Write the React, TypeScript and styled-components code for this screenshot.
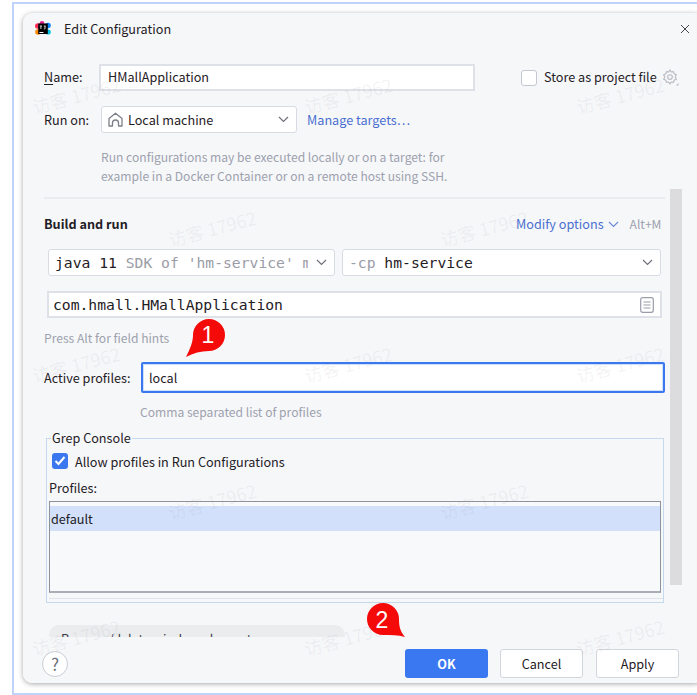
import React from "react";
import styled, { createGlobalStyle } from "styled-components";

const Global = createGlobalStyle`
  html, body { margin: 0; padding: 0; background: #fff; }
  body { font-family: "Noto Sans CJK SC", "Noto Sans", sans-serif; width: 697px; height: 695px; overflow: hidden; }
`;

const Frame = styled.div`
  position: relative; box-sizing: border-box;
  margin-left: 12px; width: 685px; margin-top: 2px; height: 693px;
  border: solid #bfd3fb; border-width: 2px 0 2px 2px;
  padding: 9px 0 9px 9px; overflow: hidden; background: #fff;
`;
const Dialog = styled.div`
  box-sizing: border-box; width: 680px; height: 670px; background: #f6f7f9;
  border-radius: 9px; box-shadow: 0 1px 5px rgba(0,0,0,.35);
  display: flex; flex-direction: column; position: relative; color: #1f2025;
  font-size: 12.65px; line-height: 18px; overflow: hidden;
`;
const TitleBar = styled.div`
  display: flex; align-items: center; height: 32px; padding: 0 13px 0 12px; flex: none;
`;
const TitleText = styled.span` margin: 0 0 1px 13px; flex: 1; `;
const Body = styled.div`
  flex: 1; display: flex; flex-direction: column; padding: 19px 0 0 21px; position: relative; min-height: 0; overflow: hidden;
`;
const Row = styled.div<{ $gap?: number; $top?: number; $left?: number }>`
  display: flex; align-items: center; gap: ${p => p.$gap ?? 0}px;
  margin-top: ${p => p.$top ?? 0}px; margin-left: ${p => p.$left ?? 0}px; flex: none;
`;
const Label = styled.span<{ $w: number; $bold?: boolean; $up?: boolean }>`
  width: ${p => p.$w}px; flex: none; font-weight: ${p => p.$bold ? 700 : 400}; margin-bottom: ${p => p.$up ? 2 : 0}px;
  u { text-underline-offset: 2px; }
`;
const Field = styled.div<{ $w: number; $focus?: boolean; $mono?: boolean; $h?: number }>`
  box-sizing: border-box; width: ${p => p.$w}px; height: ${p => p.$h ?? 27}px; background: #fff;
  border: 2px solid ${p => p.$focus ? "#3b78f0" : "#dfe1e8"};
  ${p => p.$focus ? "box-shadow: inset 0 0 0 1px #cfe0fb; border-radius: 2px;" : ""}
  display: flex; align-items: center; padding: 0 6px ${p => p.$focus ? 0 : 2}px ${p => p.$focus ? 6 : 7}px; flex: none;
  ${p => p.$mono ? `font-family: "DejaVu Sans Mono", monospace; font-size: 14.7px; padding: 0 6px 0 4px; justify-content: space-between;` : ""}
`;
const Select = styled.div<{ $w: number }>`
  box-sizing: border-box; width: ${p => p.$w}px; height: 27px; background: #fff;
  border: 1.5px solid #d9dbe3; border-radius: 3px; display: flex; align-items: center; flex: none;
  padding: 0 7px 0 6px; gap: 5px; white-space: nowrap; overflow: hidden;
`;
const SelectText = styled.span` flex: 1; min-width: 0; overflow: hidden; white-space: nowrap; `;
const Mono = styled(SelectText)<{ $clip?: boolean }>`
  font-family: "DejaVu Sans Mono", monospace; font-size: 14.7px; margin-right: ${p => p.$clip ? 3 : 0}px;
`;
const MonoGray = styled.span` color: #9a9ca6; `;
const Link = styled.span<{ $left?: number }>` color: #4a6fd0; margin-left: ${p => p.$left ?? 0}px; `;
const Gray = styled.span<{ $left?: number }>`
  color: #9da1ae; display: block; font-size: 12.1px; margin-left: ${p => p.$left ?? 0}px;
`;
const Help = styled.div`
  color: #9da1ae; font-size: 12.1px; margin: 14px 0 0 57px; line-height: 19px; flex: none;
`;
const Divider = styled.div`
  height: 2px; background: #ebecf0; width: 621px; margin-top: 12px; flex: none;
`;
const Box = styled.div<{ $checked?: boolean }>`
  box-sizing: border-box; width: 16px; height: 16px; border-radius: 3px; flex: none;
  background: ${p => p.$checked ? "#3b78f0" : "#fff"};
  border: ${p => p.$checked ? "none" : "1.5px solid #c4c7d2"};
  display: flex; align-items: center; justify-content: center;
  ${p => p.$checked ? "align-self: flex-start; margin-top: 1px;" : ""}
`;
const Store = styled.div`
  display: flex; align-items: center; margin-left: 46px; white-space: nowrap;
  span { margin: 0 5px 2px 7px; }
`;
const Group = styled.div`
  box-sizing: border-box; width: 618px; height: 165px; margin: 17px 0 0 2px; border: 1px solid #c5d9ee;
  position: relative; padding: 13px 2px 0 2px; flex: none;
`;
const Legend = styled.span`
  position: absolute; left: 4px; top: -10px; background: #f6f7f9; padding: 0 1px; line-height: 18px;
`;
const CheckText = styled.span` padding-top: 1px; `;
const ListBox = styled.div`
  box-sizing: border-box; width: 612px; height: 92px; border: 1px solid #8e929c; border-bottom: 2px solid #a9adb5;
  margin-top: 4px; padding-top: 4px; background: #f8f9fa;
`;
const ListItem = styled.div`
  background: #d2e0fb; height: 25px; line-height: 25px; padding-left: 1px;
`;
const GroupLine = styled.div`
  height: 1px; background: #dfe3ea; margin-top: 5px; width: 614px;
`;
const Pill = styled.div`
  box-sizing: border-box; margin: 22px 0 0 5px; width: 296px; height: 28px; border-radius: 10px; background: #ebecee; padding-left: 12px;
  line-height: 28px; color: #3a3c44; white-space: nowrap; flex: none; overflow: hidden;
`;
const Footer = styled.div`
  box-sizing: border-box; flex: none; height: 46px; background: #f6f7f9; display: flex; align-items: flex-start;
  padding: 12px 24px 0 19px; position: relative;
`;
const Help2 = styled.div`
  box-sizing: border-box; width: 26px; height: 26px; border-radius: 50%; background: #fff; border: 1px solid #c9ccd4;
  color: #6e717a; font-size: 17px; line-height: 24px; text-align: center; margin-top: 2px;
`;
const Spacer = styled.div` flex: 1; `;
const Btn = styled.div<{ $primary?: boolean; $gap: number }>`
  box-sizing: border-box; width: 83px; height: 29px; border-radius: 3px; margin-left: ${p => p.$gap}px;
  display: flex; align-items: center; justify-content: center;
  background: ${p => p.$primary ? "#3a78f2" : "#fff"};
  color: ${p => p.$primary ? "#fff" : "#1f2025"};
  border: ${p => p.$primary ? "none" : "1.5px solid #d3d5dc"};
  font-weight: ${p => p.$primary ? 700 : 400};
`;
const Scroll = styled.div`
  position: absolute; left: 647px; top: 144px; width: 12px; height: 396px; background: #dcdcde;
`;
const Watermarks = styled.div` position: absolute; inset: 0; pointer-events: none; z-index: 2; `;
const Mark = styled.span<{ $x: number; $y: number }>`
  position: absolute; left: ${p => p.$x - 14}px; top: ${p => p.$y - 4}px; color: rgba(120,125,140,.09);
  font: 18px "Noto Sans CJK SC", sans-serif; transform: translate(-50%, -50%) rotate(-15deg); white-space: nowrap;
`;
const Pin = styled.svg<{ $x: number; $y: number }>`
  position: absolute; left: ${p => p.$x - 14}px; top: ${p => p.$y - 4}px; z-index: 3; overflow: visible;
`;

const marks: [number, number][] = [];
[76, 348, 620].forEach(x => { marks.push([x, 95], [x, 364], [x, 637]); });
[212, 484].forEach(x => { marks.push([x, 228], [x, 501]); });

const Chevron = ({ color = "#6e717a", left = 0 }: { color?: string; left?: number }) => (
  <svg width="11" height="7" viewBox="0 0 11 7" fill="none" stroke={color} strokeWidth="1.2" style={{ flex: "none", marginLeft: left }}>
    <path d="M1 1l4.500 4.500L10 1" />
  </svg>
);

const Logo = () => (
  <svg width="16" height="16" viewBox="0 0 16 16" style={{ flex: "none" }}>
    <circle cx="2.800" cy="5" r="2.800" fill="#ff2d55" />
    <circle cx="3" cy="11" r="2.800" fill="#ff8a00" />
    <circle cx="13" cy="4.500" r="2.800" fill="#0a84ff" />
    <circle cx="13.200" cy="11" r="2.600" fill="#00c2e0" />
    <circle cx="7" cy="2.500" r="2.400" fill="#e0218a" />
    <rect x="3.200" y="2.500" width="9.600" height="10.500" fill="#000" />
    <rect x="4.500" y="11" width="4" height="1" fill="#fff" />
    <path d="M4.800 5h2.200M5.900 5v3M8.800 5h1.800M10 5v2.500q0 .7-1.100.5" stroke="#fff" strokeWidth=".8" fill="none" />
  </svg>
);

const House = () => (
  <svg width="15" height="15" viewBox="0 0 15 15" fill="none" stroke="#7d808a" strokeWidth="1.300" style={{ flex: "none" }}>
    <path d="M1 6.500L7.500 1.200 14 6.500V14h-3.500v-3a3 3 0 0 0-6 0v3H1z" strokeLinejoin="round" />
  </svg>
);

const Gear = () => (
  <svg width="17" height="17" viewBox="0 0 17 17" fill="none" stroke="#b6b9c2" strokeWidth="1.100" style={{ flex: "none" }}>
    <path d="M8 1l1.200 2 2.300-.4.700 2.200 2.100 1L13.200 8l1.100 2.200-2.100 1-.7 2.200-2.300-.4L8 15l-1.200-2-2.300.4-.7-2.200-2.100-1L2.800 8 1.700 5.800l2.100-1 .7-2.200 2.300.4z" />
    <circle cx="8" cy="8" r="2.300" />
    <path d="M16.500 14v2.500h-2.500z" fill="#b6b9c2" stroke="none" />
  </svg>
);

const Close = () => (
  <svg width="10" height="10" viewBox="0 0 10 10" stroke="#44464e" strokeWidth="1" fill="none">
    <path d="M1 1l8 8M9 1l-8 8" />
  </svg>
);

const DocIcon = () => (
  <svg width="14" height="16" viewBox="0 0 14 16" fill="none" stroke="#9a9da8" strokeWidth="1.200" style={{ flex: "none" }}>
    <rect x=".7" y=".7" width="12.600" height="14.600" rx="2" />
    <path d="M3.500 5h7M3.500 8h7M3.500 11h7" />
  </svg>
);

const PinOne = () => (
  <Pin $x={185} $y={316} width="40" height="42" viewBox="0 0 40 42">
    <path d="M1 41C5 33 8 26 8 19A16 16 0 1 1 24 35C16 35 8 37 1 41z" fill="#f50a0a" />
    <text x="23" y="27" fill="#fff" fontSize="23" fontFamily="Liberation Sans" textAnchor="middle">1</text>
  </Pin>
);
const PinTwo = () => (
  <Pin $x={366} $y={602} width="40" height="36" viewBox="0 0 40 36">
    <path d="M39 35C34 29 33 24 33 17A16 16 0 1 0 17 33C25 33 32 33 39 35z" fill="#f50a0a" />
    <text x="16" y="26" fill="#fff" fontSize="23" fontFamily="Liberation Sans" textAnchor="middle">2</text>
  </Pin>
);

export default function App() {
  return (
    <>
      <Global />
      <Frame>
        <Dialog>
          <TitleBar>
            <Logo />
            <TitleText>Edit Configuration</TitleText>
            <Close />
          </TitleBar>
          <Body>
            <Row>
              <Label $w={55} $up><u>N</u>ame:</Label>
              <Field $w={376}>HMallApplication</Field>
              <Store><Box /><span>Store as project file</span><Gear /></Store>
            </Row>
            <Row $top={15}>
              <Label $w={57}>Run on:</Label>
              <Select $w={196}><House /><SelectText>Local machine</SelectText><Chevron /></Select>
              <Link $left={10}>Manage targets…</Link>
            </Row>
            <Help>
              Run configurations may be executed locally or on a target: for<br />
              example in a Docker Container or on a remote host using SSH.
            </Help>
            <Divider />
            <Row $top={16}>
              <Label $w={472} $bold>Build and run</Label>
              <Link>Modify options</Link>
              <Chevron color="#6d8bd8" left={4} />
              <Gray $left={11}>Alt+M</Gray>
            </Row>
            <Row $top={16} $gap={7} $left={4}>
              <Select $w={287}><Mono $clip>java 11 <MonoGray>SDK of 'hm-service' m</MonoGray></Mono><Chevron /></Select>
              <Select $w={319}><Mono><MonoGray>-cp</MonoGray> hm-service</Mono><Chevron /></Select>
            </Row>
            <Row $top={15} $left={3}>
              <Field $w={615} $mono>com.hmall.HMallApplication<DocIcon /></Field>
            </Row>
            <Row $top={11}><Gray>Press Alt for field hints</Gray></Row>
            <Row $top={15}>
              <Label $w={97}>Active profiles:</Label>
              <Field $w={524} $h={31} $focus>local</Field>
            </Row>
            <Row $top={10}><Gray $left={96}>Comma separated list of profiles</Gray></Row>
            <Group>
              <Legend>Grep Console</Legend>
              <Row $gap={7} $left={3}>
                <Box $checked>
                  <svg width="12" height="10" viewBox="0 0 12 10" fill="none" stroke="#fff" strokeWidth="2"><path d="M1.500 5l3 3 6-7" /></svg>
                </Box>
                <CheckText>Allow profiles in Run Configurations</CheckText>
              </Row>
              <Row $top={8}><span>Profiles:</span></Row>
              <ListBox><ListItem>default</ListItem></ListBox>
              <GroupLine />
            </Group>
            <Pill>Remove/delete window elements</Pill>
            <Scroll />
          </Body>
          <Footer>
            <Help2>?</Help2>
            <Spacer />
            <Btn $primary $gap={0}>OK</Btn>
            <Btn $gap={12}>Cancel</Btn>
            <Btn $gap={13}>Apply</Btn>
          </Footer>
        </Dialog>
        <Watermarks>
          {marks.map(([x, y], i) => <Mark key={i} $x={x} $y={y}>访客 17962</Mark>)}
        </Watermarks>
        <PinOne />
        <PinTwo />
      </Frame>
    </>
  );
}
